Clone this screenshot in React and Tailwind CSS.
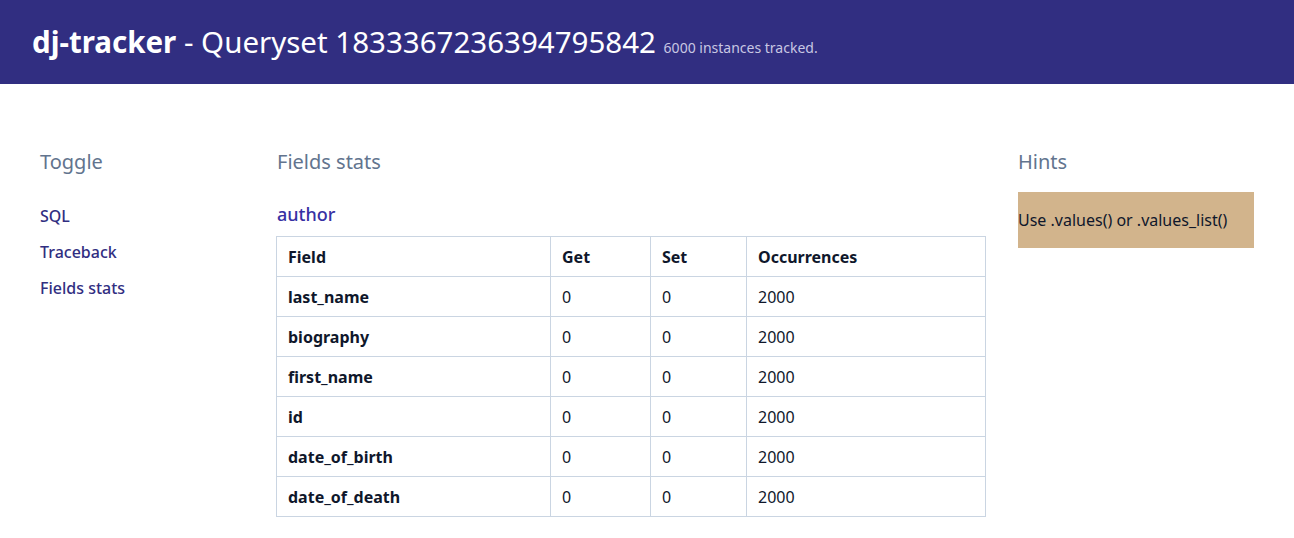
const rows = [
  { field: "last_name", get: 0, set: 0, occ: 2000 },
  { field: "biography", get: 0, set: 0, occ: 2000 },
  { field: "first_name", get: 0, set: 0, occ: 2000 },
  { field: "id", get: 0, set: 0, occ: 2000 },
  { field: "date_of_birth", get: 0, set: 0, occ: 2000 },
  { field: "date_of_death", get: 0, set: 0, occ: 2000 },
];

const App = () => {
  return (
    <div className="min-h-screen bg-white font-['Noto_Sans',sans-serif] text-slate-900">
      <header className="flex h-[84px] items-center bg-[#312e81] px-8 text-white">
        <h1 className="text-[29.5px] leading-none">
          <span className="font-bold">dj-tracker</span> - Queryset 1833367236394795842{" "}
          <span className="text-[14px] text-[#c8c7e3]">6000 instances tracked.</span>
        </h1>
      </header>

      <main className="flex px-10 pt-16">
        <aside className="w-[236px] shrink-0">
          <h2 className="text-xl text-slate-500">Toggle</h2>
          <nav className="mt-7 flex flex-col gap-3 font-medium text-[#312e81]">
            <a href="#">SQL</a>
            <a href="#">Traceback</a>
            <a href="#">Fields stats</a>
          </nav>
        </aside>

        <section className="w-[710px] shrink-0">
          <h2 className="pl-px text-xl text-slate-500">Fields stats</h2>
          <h3 className="mt-[26px] pl-px text-lg font-medium leading-6 text-[#3730a3]">author</h3>
          <table className="mt-2.5 w-full border-collapse text-left">
            <thead>
              <tr className="h-10">
                <th className="w-[274px] border border-slate-300 pl-[11px] font-bold">Field</th>
                <th className="w-[100px] border border-slate-300 pl-[11px] font-bold">Get</th>
                <th className="w-[96px] border border-slate-300 pl-[11px] font-bold">Set</th>
                <th className="border border-slate-300 pl-[11px] font-bold">Occurrences</th>
              </tr>
            </thead>
            <tbody>
              {rows.map((r) => (
                <tr key={r.field} className="h-10">
                  <td className="border border-slate-300 pl-[11px] font-bold">{r.field}</td>
                  <td className="border border-slate-300 pl-[11px]">{r.get}</td>
                  <td className="border border-slate-300 pl-[11px]">{r.set}</td>
                  <td className="border border-slate-300 pl-[11px]">{r.occ}</td>
                </tr>
              ))}
            </tbody>
          </table>
        </section>

        <aside className="ml-8 w-[236px] shrink-0">
          <h2 className="text-xl text-slate-500">Hints</h2>
          <div className="mt-4 flex h-14 items-center bg-[#d2b48c]">
            Use .values() or .values_list()
          </div>
        </aside>
      </main>
    </div>
  );
};

export default App;
